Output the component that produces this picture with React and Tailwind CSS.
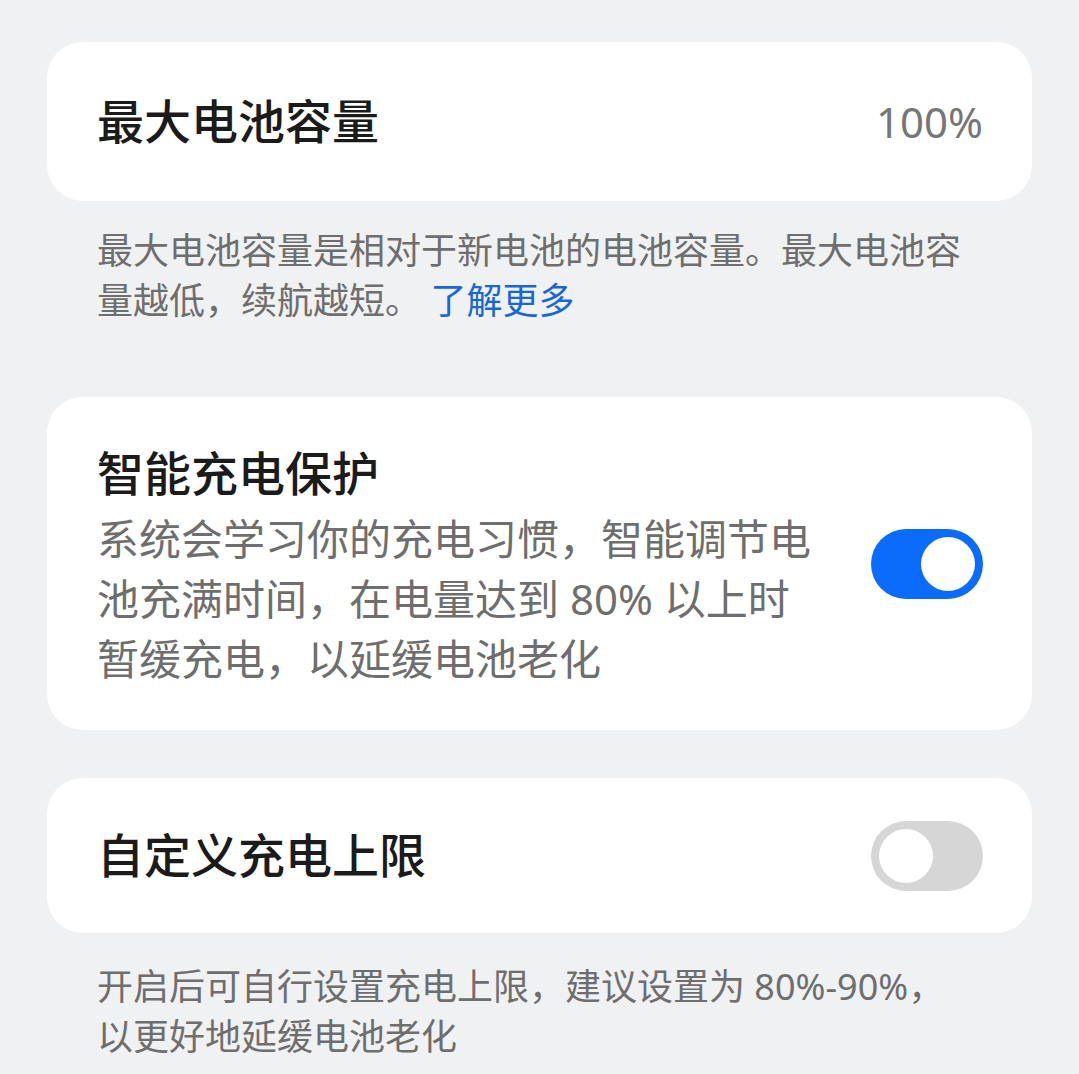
import React, { useState } from 'react'

const font = { fontFamily: '"Noto Sans", "Noto Sans CJK SC", sans-serif' }

function Toggle({ on, onChange, className = '' }) {
  return (
    <button
      type="button"
      onClick={() => onChange(!on)}
      className={`flex h-[70px] w-[112px] shrink-0 items-center rounded-full px-2 transition-colors ${
        on ? 'justify-end bg-[#0b6bfa]' : 'justify-start bg-[#d6d6d6]'
      } ${className}`}
    >
      <span className="block h-[54px] w-[54px] rounded-full bg-white" />
    </button>
  )
}

export default function App() {
  const [smart, setSmart] = useState(true)
  const [custom, setCustom] = useState(false)

  return (
    <div className="min-h-screen bg-[#f0f1f3] px-[47px] pt-[42px]" style={font}>
      <div className="flex h-[159px] items-center justify-between rounded-[36px] bg-white pl-[50px] pr-[49px]">
        <span className="text-[47px] font-medium leading-none text-[#1b1b1b]">最大电池容量</span>
        <span className="text-[42px] leading-none text-[#767676]">100%</span>
      </div>

      <div className="mt-[25px] pl-[50px] text-[36px] leading-[50px] text-[#6e6e6e]">
        <div className="whitespace-nowrap">最大电池容量是相对于新电池的电池容量。最大电池容</div>
        <div className="whitespace-nowrap">
          量越低，续航越短。 <span className="text-[#1767d8]">了解更多</span>
        </div>
      </div>

      <div className="mt-[71px] flex items-center justify-between rounded-[36px] bg-white pb-[41px] pl-[50px] pr-[49px] pt-[46px]">
        <div>
          <div className="text-[47px] font-medium leading-[60px] text-[#1b1b1b]">智能充电保护</div>
          <div className="mt-[6px] text-[42px] leading-[60px] text-[#6e6e6e]">
            <div className="whitespace-nowrap">系统会学习你的充电习惯，智能调节电</div>
            <div className="whitespace-nowrap">池充满时间，在电量达到 80% 以上时</div>
            <div className="whitespace-nowrap">暂缓充电，以延缓电池老化</div>
          </div>
        </div>
        <Toggle on={smart} onChange={setSmart} className="mb-[5px]" />
      </div>

      <div className="mt-[48px] flex h-[155px] items-center justify-between rounded-[36px] bg-white pl-[50px] pr-[49px]">
        <span className="text-[47px] font-medium leading-none text-[#1b1b1b]">自定义充电上限</span>
        <Toggle on={custom} onChange={setCustom} />
      </div>

      <div className="mt-[29px] pl-[50px] text-[36px] leading-[50px] text-[#6e6e6e]">
        <div className="whitespace-nowrap">开启后可自行设置充电上限，建议设置为 80%-90%，</div>
        <div className="whitespace-nowrap">以更好地延缓电池老化</div>
      </div>
    </div>
  )
}
